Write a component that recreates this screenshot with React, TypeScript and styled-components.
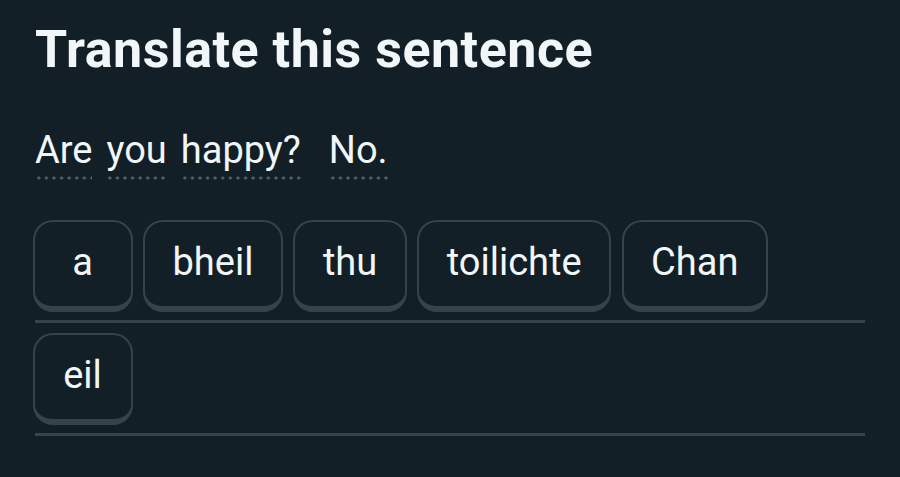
import React from "react";
import styled, { createGlobalStyle } from "styled-components";

const Global = createGlobalStyle`
  html, body { margin: 0; padding: 0; background: #131f26; }
  body { width: 900px; height: 477px; overflow: hidden; }
`;

const Page = styled.div`
  box-sizing: border-box;
  width: 900px;
  height: 477px;
  padding: 20px 35px 0 35px;
  background: #131f26;
  color: #f1f6f8;
  font-family: Roboto, "Noto Sans", sans-serif;
`;

const Title = styled.h1`
  margin: 0;
  font-size: 52px;
  line-height: 60px;
  font-weight: 700;
  letter-spacing: 0.5px;
`;

const Sentence = styled.div`
  margin-top: 50px;
  display: flex;
  gap: 14px;
  font-size: 38px;
  line-height: 40px;
  font-weight: 400;
`;

const Word = styled.span<{ $gapAfter?: number }>`
  display: inline-block;
  padding-bottom: 10px;
  background-image: radial-gradient(circle, #56636c 1.3px, transparent 1.8px);
  background-size: 7.6px 4px;
  background-repeat: repeat-x;
  background-position: left bottom;
  margin-right: ${(p) => p.$gapAfter ?? 0}px;
`;

const Lines = styled.div`
  margin-top: 40px;
  width: 830px;
  display: flex;
  flex-direction: column;
`;

const AnswerLine = styled.div`
  display: flex;
  gap: 10.5px;
  padding-bottom: 8px;
  margin-bottom: 10px;
  border-bottom: 3px solid #37434c;
  & > :first-child { margin-left: -2.5px; }
`;

const Chip = styled.div`
  box-sizing: border-box;
  min-width: 100px;
  height: 92px;
  padding: 0 27.5px 4px;
  border: 2.5px solid #37434c;
  border-bottom-width: 6px;
  border-radius: 20px;
  display: flex;
  align-items: center;
  justify-content: center;
  font-size: 38px;
  color: #f1f6f8;
`;

const rows = [["a", "bheil", "thu", "toilichte", "Chan"], ["eil"]];

export default function App() {
  return (
    <Page>
      <Global />
      <Title>Translate this sentence</Title>
      <Sentence>
        <Word>Are</Word>
        <Word>you</Word>
        <Word $gapAfter={14}>happy?</Word>
        <Word>No.</Word>
      </Sentence>
      <Lines>
        {rows.map((r, i) => (
          <AnswerLine key={i}>
            {r.map((w) => (
              <Chip key={w}>{w}</Chip>
            ))}
          </AnswerLine>
        ))}
      </Lines>
    </Page>
  );
}
